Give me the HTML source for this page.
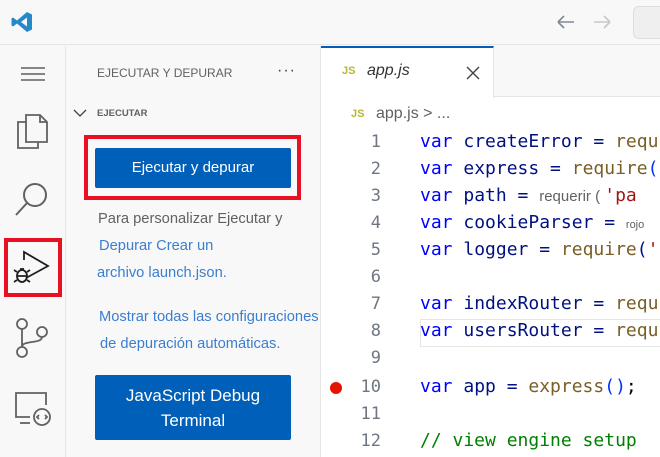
<!DOCTYPE html>
<html><head><meta charset="utf-8"><style>
*{margin:0;padding:0;box-sizing:border-box}
body{width:660px;height:457px;overflow:hidden;background:#f8f8f8;font-family:"Liberation Sans",sans-serif;position:relative}
.a{position:absolute}
.code{position:absolute;left:420px;font-family:"DejaVu Sans Mono","Liberation Mono",monospace;font-size:18px;white-space:pre;color:#001080;line-height:22px;height:22px}
.ln{position:absolute;left:321px;width:60px;text-align:right;font-family:"DejaVu Sans Mono","Liberation Mono",monospace;font-size:17px;color:#6e7681;line-height:22px}
.k{color:#0000ff}.f{color:#795e26}.s{color:#a31515}.c{color:#008000}
.t{color:#616161;font-size:14.5px}
.l{color:#3b7ecf;font-size:14.5px}
.sm{font-family:"Liberation Sans",sans-serif;color:#616161}
</style></head><body>
<div class="a" style="left:0;top:0;width:660px;height:45px;background:#f8f8f8;border-bottom:1px solid #e5e5e5"></div>
<svg class="a" style="left:10px;top:10px" width="24" height="24" viewBox="0 0 24 24"><path d="M17 2 L22 4.5 V19.5 L17 22 L7 13.5 L3 16.5 L1.5 15.5 V8.5 L3 7.5 L7 10.5 Z M17 7.5 L11 12 L17 16.5Z" fill="#2489ca" fill-rule="evenodd"/></svg>
<svg class="a" style="left:554px;top:12px" width="60" height="20"><path d="M4 10H20M4 10L10 4M4 10L10 16" stroke="#7f8a96" stroke-width="1.6" fill="none"/><path d="M40 10H56M56 10L50 4M56 10L50 16" stroke="#c8c8c8" stroke-width="1.6" fill="none"/></svg>
<div class="a" style="left:633px;top:6px;width:40px;height:33px;border:1px solid #ddd;border-radius:6px;background:#efefef"></div>
<div class="a" style="left:0;top:46px;width:66px;height:411px;background:#f8f8f8;border-right:1px solid #e5e5e5"></div>
<svg class="a" style="left:20px;top:66px" width="26" height="16"><path d="M1 2H25M1 8H25M1 14H25" stroke="#616161" stroke-width="1.6"/></svg>
<svg class="a" style="left:14px;top:112px" width="36" height="38" viewBox="0 0 36 38" fill="none" stroke="#616161" stroke-width="1.8"><path d="M12 10H4V36H24V30"/><path d="M12 3H26L33 10V30H12Z"/><path d="M26 3V10H33"/></svg>
<svg class="a" style="left:14px;top:181px" width="36" height="38" fill="none" stroke="#616161" stroke-width="2"><circle cx="21" cy="14" r="11"/><path d="M13 22L2 34"/></svg>
<div class="a" style="left:4px;top:238px;width:58px;height:59px;border:4px solid #e81123"></div>
<svg class="a" style="left:12px;top:250px" width="40" height="40" fill="none" stroke="#1e1e1e" stroke-width="1.8"><path d="M12 10V2L36 16L14 28"/><ellipse cx="10" cy="26" rx="5" ry="6"/><path d="M5 26H15M2 20L5 22M18 20L15 22M2 32L5 30M18 32L15 30M8 19L12 19"/></svg>
<svg class="a" style="left:14px;top:318px" width="34" height="40" fill="none" stroke="#616161" stroke-width="1.8"><circle cx="8" cy="6" r="5"/><circle cx="8" cy="34" r="5"/><circle cx="28" cy="14" r="5"/><path d="M8 11V29M28 19C28 26 8 22 8 29"/></svg>
<svg class="a" style="left:14px;top:391px" width="38" height="36" fill="none" stroke="#616161" stroke-width="1.8"><path d="M16 26H2V2H32V14"/><path d="M6 32H16"/><circle cx="28" cy="26" r="8"/><path d="M25 24L23 26L25 28M31 24L33 26L31 28"/></svg>
<div class="a" style="left:97px;top:66px;font-size:12px;color:#616161">EJECUTAR Y DEPURAR</div>
<div class="a" style="left:277px;top:62px;font-size:16px;color:#424242;letter-spacing:1px">···</div>
<svg class="a" style="left:73px;top:108px" width="16" height="10"><path d="M1 2L7 8L13 2" stroke="#424242" stroke-width="1.3" fill="none"/></svg>
<div class="a" style="left:97px;top:108px;font-size:9.5px;font-weight:bold;color:#616161">EJECUTAR</div>
<div class="a" style="left:84px;top:135px;width:217px;height:65px;border:4px solid #e81123"></div>
<div class="a" style="left:95px;top:148px;width:196px;height:40px;background:#005fb8;border-radius:2px;color:#fff;font-size:15px;text-align:center;line-height:40px">Ejecutar y depurar</div>
<div class="a t" style="left:98px;top:211px;font-size:14.7px">Para personalizar Ejecutar y</div>
<div class="a l" style="left:99px;top:238px;font-size:14.7px">Depurar Crear un</div>
<div class="a l" style="left:97px;top:265px;font-size:14.7px">archivo launch.json.</div>
<div class="a l" style="left:99px;top:309px;font-size:14.7px">Mostrar todas las configuraciones</div>
<div class="a l" style="left:100px;top:336px;font-size:14.7px">de depuración automáticas.</div>
<div class="a" style="left:95px;top:375px;width:196px;height:65px;background:#005fb8;border-radius:2px;color:#fff;font-size:17px;text-align:center;line-height:25px;padding-top:8px">JavaScript Debug<br>Terminal</div>
<div class="a" style="left:320px;top:46px;width:340px;height:411px;background:#fff;border-left:1px solid #e5e5e5"></div>
<div class="a" style="left:321px;top:46px;width:339px;height:51px;background:#f8f8f8;border-bottom:1px solid #e5e5e5"></div>
<div class="a" style="left:321px;top:46px;width:173px;height:52px;background:#fff;border-top:2px solid #005fb8;border-right:1px solid #e5e5e5"></div>
<div class="a" style="left:342px;top:65px;font-size:11px;font-weight:bold;color:#b7b73b">JS</div>
<div class="a" style="left:367px;top:62px;font-size:16px;font-style:italic;color:#333">app.js</div>
<svg class="a" style="left:466px;top:66px" width="14" height="14"><path d="M1 1L13 13M13 1L1 13" stroke="#424242" stroke-width="1.4"/></svg>
<div class="a" style="left:351px;top:108px;font-size:11px;font-weight:bold;color:#b7b73b">JS</div>
<div class="a" style="left:376px;top:105px;font-size:16px;color:#616161">app.js &gt; ...</div>
<div class="a" style="left:420px;top:319px;width:240px;height:28px;border:1px solid #e5e5e5;border-right:none"></div>
<div class="a" style="left:330px;top:382px;width:12px;height:12px;border-radius:50%;background:#e51400"></div>
<div class="ln" style="top:131px">1</div>
<div class="ln" style="top:158px">2</div>
<div class="ln" style="top:185px">3</div>
<div class="ln" style="top:212px">4</div>
<div class="ln" style="top:239px">5</div>
<div class="ln" style="top:266px">6</div>
<div class="ln" style="top:293px">7</div>
<div class="ln" style="top:320px">8</div>
<div class="ln" style="top:347px">9</div>
<div class="ln" style="top:376px">10</div>
<div class="ln" style="top:403px">11</div>
<div class="ln" style="top:430px">12</div>
<div class="code" style="top:131px"><span class="k">var</span> createError = <span class="f">requ</span></div>
<div class="code" style="top:158px"><span class="k">var</span> express = <span class="f">require</span><span style="color:#0431fa">(</span></div>
<div class="code" style="top:185px"><span class="k">var</span> path = <span class="sm" style="font-size:15px">requerir ( </span><span class="s">'pa</span></div>
<div class="code" style="top:212px"><span class="k">var</span> cookieParser = <span class="sm" style="font-size:11px">rojo</span></div>
<div class="code" style="top:239px"><span class="k">var</span> logger = <span class="f">require</span>(<span class="s">'</span></div>
<div class="code" style="top:293px"><span class="k">var</span> indexRouter = <span class="f">requ</span></div>
<div class="code" style="top:320px"><span class="k">var</span> usersRouter = <span class="f">requ</span></div>
<div class="code" style="top:376px"><span class="k">var</span> app = <span class="f">express</span><span style="color:#0431fa">()</span><span style="color:#000">;</span></div>
<div class="code" style="top:430px"><span class="c">// view engine setup</span></div>
</body></html>
